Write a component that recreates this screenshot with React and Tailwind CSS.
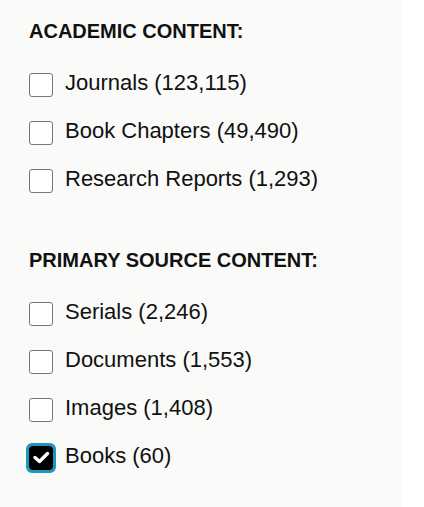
import React from "react";

const groups = [
  {
    title: "ACADEMIC CONTENT:",
    items: [
      { label: "Journals (123,115)" },
      { label: "Book Chapters (49,490)" },
      { label: "Research Reports (1,293)" },
    ],
  },
  {
    title: "PRIMARY SOURCE CONTENT:",
    items: [
      { label: "Serials (2,246)" },
      { label: "Documents (1,553)" },
      { label: "Images (1,408)" },
      { label: "Books (60)", checked: true },
    ],
  },
];

function Box({ checked }) {
  if (checked) {
    return (
      <span className="flex h-6 w-6 shrink-0 items-center justify-center rounded-[3px] bg-black outline-[3px] outline-solid outline-[#1a98bd] outline-offset-0">
        <svg width="24" height="24" viewBox="0 0 24 24" fill="none">
          <path
            d="M6 11.5 L10.5 15.5 L18.5 7.5"
            stroke="#ffffff"
            strokeWidth="3.4"
            strokeLinecap="round"
            strokeLinejoin="round"
          />
        </svg>
      </span>
    );
  }
  return (
    <span className="block h-6 w-6 shrink-0 rounded-[3px] border border-[#767676] bg-white" />
  );
}

export default function App() {
  return (
    <div
      className="flex min-h-[507px] w-[424px] bg-white"
      style={{ fontFamily: '"Liberation Sans", Arial, sans-serif' }}
    >
      <div className="w-[401px] bg-[#fafaf9] pl-[29px] pt-[19px]">
        {groups.map((g, gi) => (
          <section key={g.title} className={gi > 0 ? "mt-[55px]" : ""}>
            <h2 className="text-[20px] leading-[24px] font-bold text-[#111]">
              {g.title}
            </h2>
            <ul className="mt-[30px] flex flex-col gap-6">
              {g.items.map((it) => (
                <li key={it.label} className="flex items-start gap-3">
                  <Box checked={it.checked} />
                  <span className="text-[22px] leading-[20px] text-[#111]">
                    {it.label}
                  </span>
                </li>
              ))}
            </ul>
          </section>
        ))}
      </div>
    </div>
  );
}
